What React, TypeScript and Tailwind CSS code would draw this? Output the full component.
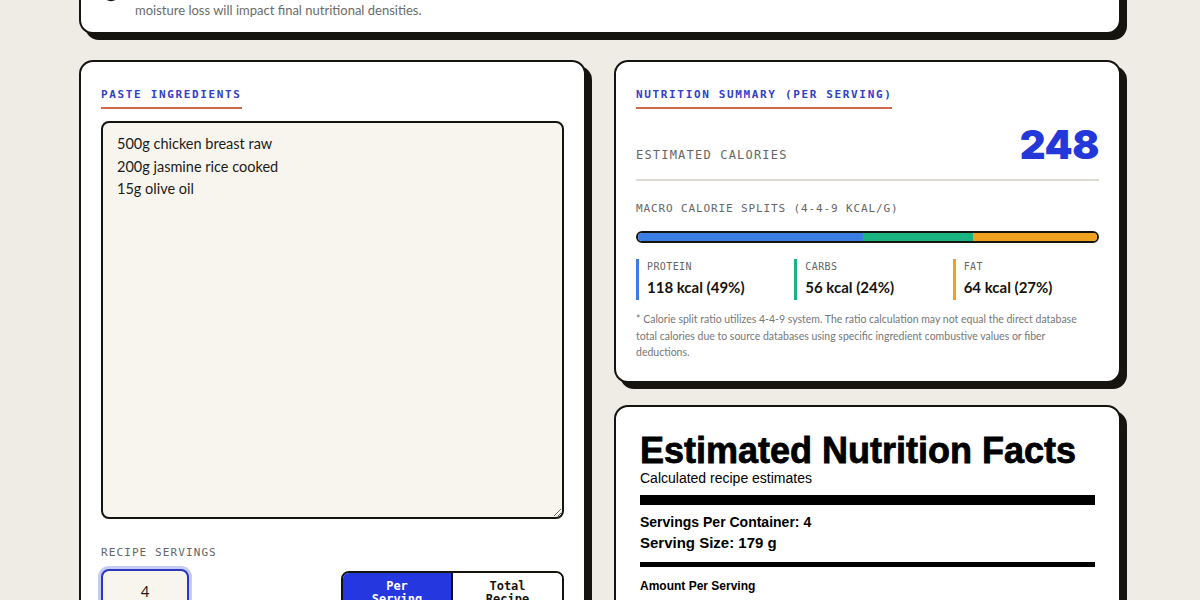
import React from "react";

const ink = "border-[#16140f]";

function SectionTitle({ children }: { children: React.ReactNode }) {
  return (
    <h2 className="block w-fit border-b-2 border-[#d2694a] pb-1 font-['DejaVu_Sans_Mono',monospace] text-[11px] font-bold leading-4 tracking-[0.15em] text-[#3040c8]">
      {children}
    </h2>
  );
}

function MacroStat({
  label,
  value,
  bar,
}: {
  label: string;
  value: string;
  bar: string;
}) {
  return (
    <div className={`border-l-[3px] pb-[3px] pl-2 ${bar}`}>
      <div className="font-['DejaVu_Sans_Mono',monospace] text-[10px] leading-4 tracking-[0.04em] text-[#666]">
        {label}
      </div>
      <div className="mt-[2px] text-[15px] font-bold leading-5 text-[#16140f]">
        {value}
      </div>
    </div>
  );
}

export default function App() {
  return (
    <div className="h-[600px] overflow-hidden bg-[#efece5] font-['Lato',sans-serif]">
      <div className="mx-auto -mt-[36px] w-[1042px]">
        {/* note card */}
        <div
          className={`flex gap-[14px] rounded-[14px] border-2 ${ink} bg-white px-5 pb-3 pt-[14px] shadow-[6px_6px_0_#16140f]`}
        >
          <svg
            viewBox="0 0 24 24"
            className="mt-0.5 h-5 w-5 shrink-0"
            fill="none"
            stroke="#16140f"
            strokeWidth="2"
          >
            <circle cx="12" cy="12" r="10" />
            <path d="M12 16v-4M12 8h.01" strokeLinecap="round" />
          </svg>
          <p className="text-[13px] leading-5 text-[#6b6b6b]">
            Values are estimates built from standard database entries. Cooking
            method, trimming and
            <br />
            moisture loss will impact final nutritional densities.
          </p>
        </div>

        <div className="mt-[26px] grid grid-cols-2 items-start gap-x-7">
          {/* ingredients */}
          <section
            className={`rounded-[14px] border-2 ${ink} bg-white px-5 pb-6 pt-[25px] shadow-[6px_6px_0_#16140f]`}
          >
            <SectionTitle>PASTE INGREDIENTS</SectionTitle>
            <textarea
              className={`mt-[12px] block h-[398px] w-full resize-y rounded-lg border-2 ${ink} bg-[#f8f5ee] px-[14px] py-[10px] text-[14.5px] leading-[22.5px] text-[#1d1b17] outline-none`}
              defaultValue={
                "500g chicken breast raw\n200g jasmine rice cooked\n15g olive oil"
              }
            />
            <div className="mb-2 mt-[26px] font-['DejaVu_Sans_Mono',monospace] text-[11px] leading-4 tracking-[0.1em] text-[#666]">
              RECIPE SERVINGS
            </div>
            <div className="flex items-start justify-between">
              <input
                className="h-[44px] w-[88px] rounded-lg border-2 border-[#2a38c0] bg-[#f8f5ee] text-center text-[15px] text-[#1d1b17] shadow-[0_0_0_3px_#c7cbf5] outline-none"
                defaultValue="4"
              />
              <div
                className={`mt-[2px] flex w-[223px] overflow-hidden rounded-lg border-2 ${ink}`}
              >
                <button className="w-[108px] bg-[#2538e0] px-4 py-[7px] font-['DejaVu_Sans_Mono',monospace] text-[12px] font-bold leading-[13px] text-white">
                  Per Serving
                </button>
                <button
                  className={`flex-1 border-l-2 ${ink} bg-white px-4 py-[7px] font-['DejaVu_Sans_Mono',monospace] text-[12px] font-bold leading-[13px] text-[#16140f]`}
                >
                  Total Recipe
                </button>
              </div>
            </div>
          </section>

          <div className="flex flex-col gap-[22px]">
            {/* summary */}
            <section
              className={`rounded-[14px] border-2 ${ink} bg-white px-5 pb-5 pt-[25px] shadow-[6px_6px_0_#16140f]`}
            >
              <SectionTitle>NUTRITION SUMMARY (PER SERVING)</SectionTitle>
              <div className="mt-[16px] flex items-baseline justify-between border-b-2 border-[#dedbd3] pb-[14px]">
                <span className="font-['DejaVu_Sans_Mono',monospace] text-[12px] tracking-[0.1em] text-[#666]">
                  ESTIMATED CALORIES
                </span>
                <span className="font-['Inter',sans-serif] text-[40px] font-black leading-none tracking-[-0.01em] text-[#2437d8]">
                  248
                </span>
              </div>
              <div className="mt-[20px] font-['DejaVu_Sans_Mono',monospace] text-[11px] leading-4 tracking-[0.08em] text-[#666]">
                MACRO CALORIE SPLITS (4-4-9 KCAL/G)
              </div>
              <div
                className={`mt-[14px] flex h-3 overflow-hidden rounded-full border-2 ${ink}`}
              >
                <div className="w-[49%] bg-[#3b7ee3]" />
                <div className="w-[24%] bg-[#19b47f]" />
                <div className="flex-1 bg-[#efa21e]" />
              </div>
              <div className="mt-[16px] grid grid-cols-3 gap-3">
                <MacroStat
                  label="PROTEIN"
                  value="118 kcal (49%)"
                  bar="border-[#3b7ee3]"
                />
                <MacroStat
                  label="CARBS"
                  value="56 kcal (24%)"
                  bar="border-[#19b47f]"
                />
                <MacroStat
                  label="FAT"
                  value="64 kcal (27%)"
                  bar="border-[#efa21e]"
                />
              </div>
              <p className="mt-[11px] text-[10.5px] leading-[16.5px] text-[#777]">
                * Calorie split ratio utilizes 4-4-9 system. The ratio
                calculation may not equal the direct database total calories due
                to source databases using specific ingredient combustive values
                or fiber deductions.
              </p>
            </section>

            {/* nutrition facts label */}
            <section
              className={`rounded-[14px] border-2 ${ink} bg-white px-5 pb-5 pt-5 shadow-[6px_6px_0_#16140f]`}
            >
              <div className="p-1 font-['Liberation_Sans',Arial,sans-serif] text-black">
                <h3 className="mt-[2px] text-[36px] font-bold leading-9 [-webkit-text-stroke:0.8px_#000]">
                  Estimated Nutrition Facts
                </h3>
                <div className="mt-[1px] text-[14px] leading-4">
                  Calculated recipe estimates
                </div>
                <div className="mt-[9px] h-[10px] bg-black" />
                <div className="mt-2 text-[14px] font-bold leading-[18px]">
                  Servings Per Container: 4
                </div>
                <div className="mt-[3px] text-[15px] font-bold leading-[18px]">
                  Serving Size: 179 g
                </div>
                <div className="mt-[10px] h-[5px] bg-black" />
                <div className="mt-[11px] text-[12px] font-bold leading-4">
                  Amount Per Serving
                </div>
                <div className="mt-1 flex items-end justify-between border-b-[5px] border-black pb-1">
                  <span className="text-[26px] font-bold">Calories</span>
                  <span className="text-[30px] font-bold">248</span>
                </div>
              </div>
            </section>
          </div>
        </div>
      </div>
    </div>
  );
}
